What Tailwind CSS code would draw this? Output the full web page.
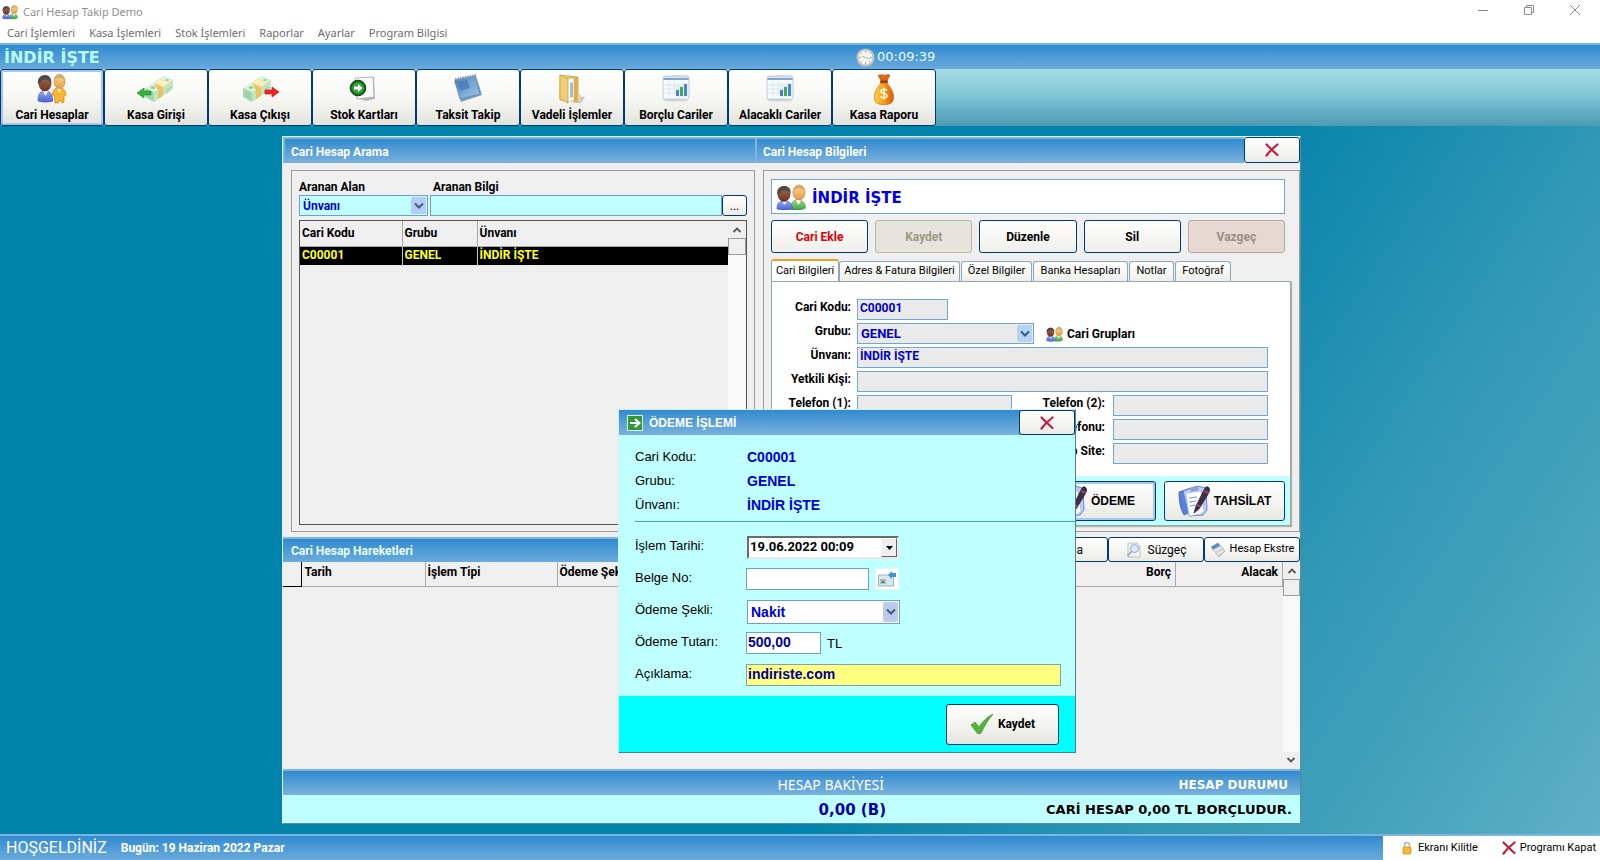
<!DOCTYPE html>
<html lang="tr">
<head>
<meta charset="utf-8">
<meta name="viewport" content="width=device-width, initial-scale=1">
<title>Cari Hesap Takip Demo</title>
<script src="https://cdn.jsdelivr.net/npm/@tailwindcss/browser@4"></script>
</head>
<body class="flex h-screen min-h-[860px] flex-col overflow-hidden bg-white font-['Roboto','Liberation_Sans',sans-serif] text-xs text-black">

<!-- shared icons -->
<svg class="absolute size-0" aria-hidden="true">
  <defs>
    <linearGradient id="gSkin" x1="0" y1="0" x2="0" y2="1"><stop offset="0" stop-color="#ffd693"/><stop offset="1" stop-color="#e79c46"/></linearGradient>
    <linearGradient id="gDark" x1="0" y1="0" x2="0" y2="1"><stop offset="0" stop-color="#a86a4c"/><stop offset="1" stop-color="#6d3522"/></linearGradient>
    <linearGradient id="gBlue" x1="0" y1="0" x2="0" y2="1"><stop offset="0" stop-color="#8fa8f5"/><stop offset="1" stop-color="#4a63d0"/></linearGradient>
    <linearGradient id="gGreen" x1="0" y1="0" x2="0" y2="1"><stop offset="0" stop-color="#9be08e"/><stop offset="1" stop-color="#3fa03c"/></linearGradient>
    <linearGradient id="gGold" x1="0" y1="0" x2="1" y2="0"><stop offset="0" stop-color="#ffd83d"/><stop offset=".4" stop-color="#fba51c"/><stop offset="1" stop-color="#d95d06"/></linearGradient>
    <linearGradient id="gFolder" x1="0" y1="0" x2="1" y2="0"><stop offset="0" stop-color="#f8e29a"/><stop offset="1" stop-color="#d9a93c"/></linearGradient>
    <linearGradient id="gScreen" x1="0" y1="0" x2="1" y2="1"><stop offset="0" stop-color="#4f83bd"/><stop offset="1" stop-color="#9cc8ea"/></linearGradient>
  </defs>
  <symbol id="people" viewBox="0 0 30 26">
    <path d="M15 25c0-7 2-9 7-9s7 3 7.500 8l-5 2h-8z" fill="url(#gGreen)" stroke="#3a8a39" stroke-width=".6"/>
    <path d="M20 16l2.500 5 2.500-5z" fill="#fff"/>
    <ellipse cx="23" cy="8.500" rx="6" ry="7.500" fill="url(#gSkin)" stroke="#b98139" stroke-width=".7"/>
    <path d="M17 7c0-5 4-6.500 7-6 3 .5 5 3 5 6-3-3-8-3.500-12 0z" fill="#cdb072"/>
    <path d="M1 25c0-6 2-8 7-8s8 2 8.500 8c-4 1.500-11 1.500-15.500 0z" fill="url(#gBlue)" stroke="#3a50b5" stroke-width=".6"/>
    <path d="M6 17l2.500 4 2.500-4z" fill="#fff"/>
    <ellipse cx="8" cy="10" rx="6" ry="7.500" fill="url(#gDark)" stroke="#4d2518" stroke-width=".7"/>
    <path d="M1.500 11C0 5 4 2 8 2s7 2 6.500 7C11 5 5 6 4 8.500z" fill="#4b4b4b"/>
  </symbol>
  <symbol id="peopleGold" viewBox="0 0 30 30">
    <path d="M18 29l-.5-7-2-1c0-5 2-7 6.500-7s7 2 7 7l-2 1v6l-2 1-2-3-2 3z" fill="#f7b733" stroke="#cf8413" stroke-width=".7"/>
    <path d="M20 14l2.500 5 2-5z" fill="#fff2c0"/>
    <ellipse cx="22.500" cy="7.500" rx="5.500" ry="7" fill="url(#gSkin)" stroke="#b98139" stroke-width=".7"/>
    <path d="M17 6c0-4 3-6 6-5.500 3 .5 5 3 5 5.500-3-2.500-7-3-11 0z" fill="#cdb072"/>
    <path d="M1 27c0-7 2-10 7-10s7 2 8 10c-4 1.500-11 1.500-15 0z" fill="url(#gBlue)" stroke="#3a50b5" stroke-width=".6"/>
    <path d="M6 17l2.500 5 2.500-5z" fill="#fff"/>
    <ellipse cx="8" cy="9.500" rx="6" ry="7.500" fill="url(#gDark)" stroke="#4d2518" stroke-width=".7"/>
    <path d="M1 10C0 4 4 1 8 1s7 3 6 8C11 4 5 5 4 8z" fill="#4b4b4b"/>
  </symbol>
  <symbol id="money" viewBox="0 0 38 28">
    <path d="M8 13L27 1l9 4v9L17 27l-9-5z" fill="#c2e6c4"/>
    <path d="M8 13L27 1l9 4-19 12z" fill="#dff3df"/>
    <path d="M17 17v10l-9-5v-9z" fill="#a5d8ac"/>
    <path d="M17 8l6-4 9 4-6 4v9l-5 3v-9z" fill="#eec35e"/>
    <path d="M17 8l6-4 9 4-6 4z" fill="#fff0bd"/>
    <ellipse cx="16" cy="12.500" rx="2.500" ry="1.500" fill="#9ccfa3"/><ellipse cx="30" cy="5" rx="2" ry="1" fill="#9ccfa3"/>
    <path d="M10 17l5 3M10 20l5 3M29 15l5-3M29 18l5-4" stroke="#8ec596" stroke-width=".8"/>
  </symbol>
  <symbol id="report" viewBox="0 0 30 28">
    <path d="M3 2l23-1 2 2-1 22-24 1z" fill="#e3e9ef" stroke="#c3ccd6" stroke-width=".6"/>
    <rect x="2" y="3" width="26" height="22" rx="1" fill="#f8fbfe" stroke="#b3bfcd" stroke-width=".8"/>
    <rect x="2.500" y="4" width="25" height="2" fill="#7fa6ce"/>
    <path d="M3 11h12M3 15h12M3 19h10M8 7v16M13 7v14" stroke="#d4e0ec" stroke-width=".8"/>
    <rect x="14" y="9" width="13" height="14" fill="#e6f0fa"/>
    <rect x="15" y="16" width="3" height="6" fill="#4d7ec9"/><rect x="19" y="13" width="3" height="9" fill="#48a94c"/><rect x="23" y="10" width="3" height="12" fill="#4a86d0"/>
    <path d="M3 26h24l-2 1.500H6z" fill="#d5d5d5"/>
  </symbol>
  <symbol id="cross" viewBox="0 0 14 14"><path d="M1.500 1.500c3 3 7 7 11 10.500M12.500 1.500C8 5 4 9 1.500 12.500" fill="none" stroke="#c01f3f" stroke-width="2.200" stroke-linecap="round"/></symbol>
  <symbol id="down" viewBox="0 0 10 8"><path d="M1 1.500l4 4 4-4" fill="none" stroke="#3f587c" stroke-width="2"/></symbol>
  <symbol id="up" viewBox="0 0 10 8"><path d="M1.500 6L5 2.500 8.500 6" fill="none" stroke="#555" stroke-width="1.800"/></symbol>
  <symbol id="notes" viewBox="0 0 32 32">
    <path d="M1 7l12-4 3 22-10 5C2 23 1 15 1 7z" fill="#5b7fe0" stroke="#3a57b5" stroke-width=".8"/>
    <path d="M5 6l14-5 9 2 1 22-4 5-14 1z" fill="#b9cdf8" stroke="#5273c9" stroke-width=".8"/>
    <path d="M8 8l15-2 3 20-3 3-12 2z" fill="#fbfcff" stroke="#9bb0de" stroke-width=".6"/>
    <path d="M11 13l8-1M11 17l7-1M12 21l5-1" stroke="#8193c4"/>
    <path d="M12 3l7-2 2 4-8 2z" fill="#8fa2cf"/>
    <path d="M30 2c3 2 1 6-1 9l-8 13-5 4 2-7 8-16c1-2 2-4 4-3z" fill="#3e2f45" stroke="#221a2b" stroke-width=".7"/>
    <path d="M26 6l5 2M19 20l4 2" stroke="#b7416b" stroke-width="1.600"/>
  </symbol>
</svg>

<header class="bg-white font-['Noto_Sans','Open_Sans',sans-serif]">
  <div class="flex h-6 items-center">
    <svg class="ml-0.5 size-4"><use href="#people"/></svg>
    <h1 class="ml-[5px] text-[11px] text-[#8f8f8f]">Cari Hesap Takip Demo</h1>
    <div class="mr-0.5 ml-auto flex self-start text-[#8a8a8a]">
      <button class="grid h-5 w-[46px] place-items-center" aria-label="Simge durumuna küçült"><svg class="h-2.5 w-2.5" viewBox="0 0 10 10"><path d="M0 5.500h10" stroke="currentColor"/></svg></button>
      <button class="grid h-5 w-[46px] place-items-center" aria-label="Önceki boyut"><svg class="h-2.5 w-2.5" viewBox="0 0 10 10" fill="none" stroke="currentColor"><path d="M.5 2.500h7v7h-7zM2.500 2V.5h7v7H8"/></svg></button>
      <button class="grid h-5 w-[46px] place-items-center" aria-label="Kapat"><svg class="h-2.5 w-2.5" viewBox="0 0 10 10"><path d="M0 0l10 10M10 0L0 10" stroke="currentColor"/></svg></button>
    </div>
  </div>
  <nav class="flex h-[19px] items-center gap-3.5 pl-[7px] text-[11px] text-[#6d6d6d]">
    <a href="#">Cari İşlemleri</a><a href="#">Kasa İşlemleri</a><a href="#">Stok İşlemleri</a><a href="#">Raporlar</a><a href="#">Ayarlar</a><a href="#">Program Bilgisi</a>
  </nav>
</header>

<div class="flex h-[26px] shrink-0 items-center border-t-2 border-[#78b4dc] bg-linear-to-b from-[#2f8ace] to-[#69abdc] pl-1">
  <span class="w-[852px] pt-0.5 font-['DejaVu_Sans',sans-serif] text-base leading-6 font-bold text-[#b8fbff]">İNDİR İŞTE</span>
  <svg class="size-[19px]" viewBox="0 0 20 20"><circle cx="10" cy="10" r="9.500" fill="#c9c9c5"/><circle cx="10" cy="10" r="8" fill="#f5f5f0" stroke="#9a9a96" stroke-width=".6"/><path d="M10 3v2M10 15v2M3 10h2M15 10h2M5 5l1 1M14 14l1 1M5 15l1-1M14 6l1-1" stroke="#999"/><path d="M6 8.500L10 10l5 1.500" fill="none" stroke="#999" stroke-width=".8"/></svg>
  <span class="ml-0.5 font-['DejaVu_Sans',sans-serif] text-[13px] text-[#e8fbff]">00:09:39</span>
</div>

<div class="flex h-[57px] shrink-0 bg-linear-to-b from-[#a6dde3] via-[#7cc4d5] to-[#4c9ab2] text-xs font-bold">
  <button class="flex h-full w-[104px] flex-col items-center justify-between rounded-[3px] border border-[#003c74] bg-linear-to-b from-white via-[#f7f7f5] to-[#e3e3dd] pt-1 pb-0.5 shadow-[inset_0_0_0_2px_#a8c4f0]"><svg class="size-[30px]"><use href="#peopleGold"/></svg><span class="leading-4">Cari Hesaplar</span></button>
  <button class="flex h-full w-[104px] flex-col items-center justify-between rounded-[3px] border border-[#003c74] bg-linear-to-b from-white via-[#f7f7f5] to-[#e3e3dd] pt-1 pb-0.5"><svg class="h-[30px] w-[38px]" viewBox="0 0 38 30"><use href="#money" width="38" height="28" y="1"/><path d="M0 19l7-5v3h7v4H7v3z" fill="#2fb53a" stroke="#1f8c2b" stroke-width=".6"/></svg><span class="leading-4">Kasa Girişi</span></button>
  <button class="flex h-full w-[104px] flex-col items-center justify-between rounded-[3px] border border-[#003c74] bg-linear-to-b from-white via-[#f7f7f5] to-[#e3e3dd] pt-1 pb-0.5"><svg class="h-[30px] w-[38px]" viewBox="0 0 38 30"><use href="#money" width="38" height="28" x="-6" y="1"/><path d="M38 18l-7-5v3h-7v4h7v3z" fill="#f52222" stroke="#c11010" stroke-width=".6"/></svg><span class="leading-4">Kasa Çıkışı</span></button>
  <button class="flex h-full w-[104px] flex-col items-center justify-between rounded-[3px] border border-[#003c74] bg-linear-to-b from-white via-[#f7f7f5] to-[#e3e3dd] pt-1 pb-0.5"><svg class="size-[30px]" viewBox="0 0 30 30"><path d="M8 5l17-2 1 22-9 2-10-3z" fill="#b9b9b9"/><path d="M6 4l18-1 1 20-17 2z" fill="#fafafa" stroke="#aaa" stroke-width=".8"/><circle cx="9" cy="14" r="7.800" fill="#166b20" stroke="#0c4714"/><circle cx="9" cy="14" r="5.800" fill="#33a13d"/><path d="M5 12.500h4V10l4.500 4L9 18v-2.500H5z" fill="#fff"/></svg><span class="leading-4">Stok Kartları</span></button>
  <button class="flex h-full w-[104px] flex-col items-center justify-between rounded-[3px] border border-[#003c74] bg-linear-to-b from-white via-[#f7f7f5] to-[#e3e3dd] pt-1 pb-0.5"><svg class="size-[30px]" viewBox="0 0 30 30"><path d="M1 7l22-5 6 19-21 7z" fill="#7e9dbd"/><path d="M2 6l20-4 5 18-20 5z" fill="url(#gScreen)" stroke="#5f86ae" stroke-width=".8"/><path d="M4 8l10-2 3 8-10 3z" fill="#3f71ac" opacity=".6"/><path d="M2 5l21-4" stroke="#8f9aa6" stroke-width="2" stroke-dasharray="1.500 1"/></svg><span class="leading-4">Taksit Takip</span></button>
  <button class="flex h-full w-[104px] flex-col items-center justify-between rounded-[3px] border border-[#003c74] bg-linear-to-b from-white via-[#f7f7f5] to-[#e3e3dd] pt-1 pb-0.5"><svg class="size-[30px]" viewBox="0 0 30 30"><path d="M20 22l8 1-4 6h-8z" fill="#c8c8c8"/><path d="M3 1l18 2v24l-18-1z" fill="url(#gFolder)" stroke="#c59a3a" stroke-width=".7"/><path d="M10 5l7-1v22l-7 3z" fill="#fafafa" stroke="#bbb" stroke-width=".6"/><path d="M13 9l3-1v15l-3 1z" fill="#a9bccf"/><path d="M3 1l8 4v24l-8-4z" fill="#f0cf72" stroke="#c59a3a" stroke-width=".7"/><path d="M17 4l4-1v24l-4 1z" fill="#dfb04a"/><path d="M21 20l3 1v6l-3 1z" fill="#e9d59b"/></svg><span class="leading-4">Vadeli İşlemler</span></button>
  <button class="flex h-full w-[104px] flex-col items-center justify-between rounded-[3px] border border-[#003c74] bg-linear-to-b from-white via-[#f7f7f5] to-[#e3e3dd] pt-1 pb-0.5"><svg class="h-7 w-[30px]"><use href="#report"/></svg><span class="leading-4">Borçlu Cariler</span></button>
  <button class="flex h-full w-[104px] flex-col items-center justify-between rounded-[3px] border border-[#003c74] bg-linear-to-b from-white via-[#f7f7f5] to-[#e3e3dd] pt-1 pb-0.5"><svg class="h-7 w-[30px]"><use href="#report"/></svg><span class="leading-4">Alacaklı Cariler</span></button>
  <button class="flex h-full w-[104px] flex-col items-center justify-between rounded-[3px] border border-[#003c74] bg-linear-to-b from-white via-[#f7f7f5] to-[#e3e3dd] pt-1 pb-0.5"><svg class="h-[31px] w-5" viewBox="0 0 20 31"><path d="M4 1c2 1 3-1 5 0s4-1 7 0l-3 6H7z" fill="#e06a12" stroke="#b14c08" stroke-width=".6"/><path d="M7 9h6c4 5 7 10 6.500 15-.5 5-3 6.500-9.500 6.500S1 29 .5 24C0 19 3 14 7 9z" fill="url(#gGold)" stroke="#c75b07" stroke-width=".6"/><rect x="6" y="6.500" width="8" height="2.500" rx="1" fill="#a33c08"/><path d="M13 16.500c-1-1.500-6-2-6 .8 0 2.700 6 1.700 6 4.500s-5 2.500-6.500.7M10 13.500v12" fill="none" stroke="#fff" stroke-width="1.400"/></svg><span class="leading-4">Kasa Raporu</span></button>
</div>

<main class="relative flex-1 bg-[linear-gradient(123deg,#0083ab_60%,#0e87ac_65%,#2f98b5_78%,#409fba_86%,#5fb0c8_100%)]">

  <!-- account window -->
  <section class="absolute top-[10px] left-[282px] flex h-[688px] w-[1019px] flex-col border border-[#dff3f8] border-r-[#5f8a96] border-b-[#5f8a96] bg-[#efefef]">
    <div class="flex h-[26px] shrink-0 text-white">
      <h2 class="flex w-[474px] items-center border-2 border-y-0 border-[#7cb6e0] border-t-2 bg-linear-to-b from-[#2f8ace] to-[#78b2de] pt-0.5 pl-1.5 text-xs font-bold">Cari Hesap Arama</h2>
      <h2 class="flex flex-1 items-center border-t-2 border-[#7cb6e0] bg-linear-to-b from-[#2f8ace] to-[#78b2de] pt-0.5 pl-1.5 text-xs font-bold">Cari Hesap Bilgileri</h2>
      <button class="grid w-[56px] place-items-center rounded-[3px] border border-[#003c74] bg-linear-to-b from-white to-[#ebebe6]" aria-label="Pencereyi kapat"><svg class="size-3.5"><use href="#cross"/></svg></button>
    </div>

    <div class="flex h-[374px] shrink-0 pt-[7px]">
      <div class="ml-2 flex h-[362px] w-[464px] flex-col border border-[#9a9a9a] px-[7px] pt-2 pb-1.5">
        <div class="grid grid-cols-[134px_1fr] font-bold leading-4">
          <label for="alan">Aranan Alan</label><label for="bilgi">Aranan Bilgi</label>
        </div>
        <div class="flex gap-0.5">
          <div class="relative w-[129px]">
            <select id="alan" class="h-[21px] w-full appearance-none border border-[#6f9fd0] bg-[#c0ffff] pl-[3px] font-bold text-[#0000c8]"><option>Ünvanı</option></select>
            <span class="pointer-events-none absolute top-0.5 right-0.5 grid h-[17px] w-[15px] place-items-center rounded-[2px] bg-[#b3cdf3]"><svg class="h-2 w-2.5"><use href="#down"/></svg></span>
          </div>
          <div class="flex flex-1">
            <input id="bilgi" class="h-[21px] min-w-0 flex-1 border border-[#6f9fd0] bg-[#c0ffff] px-1">
            <button class="h-[21px] w-[25px] rounded-[3px] border border-[#003c74] bg-linear-to-b from-white to-[#ebebe6] leading-4">...</button>
          </div>
        </div>
        <div class="mt-1 flex flex-1 border border-[#555]">
          <div class="flex-1">
            <table class="w-full table-fixed border-collapse text-left font-bold">
              <colgroup><col class="w-[102px]"><col class="w-[75px]"><col></colgroup>
              <thead><tr class="h-[25px] border-b border-[#a9a9a9]"><th class="border-r border-[#a9a9a9] pl-0.5">Cari Kodu</th><th class="border-r border-[#a9a9a9] pl-0.5">Grubu</th><th class="pl-0.5">Ünvanı</th></tr></thead>
              <tbody><tr class="h-[18px] bg-black leading-4 text-[#ffff20]"><td class="border-r border-[#c8c8c8] pb-0.5 pl-0.5">C00001</td><td class="border-r border-[#c8c8c8] pb-0.5 pl-0.5">GENEL</td><td class="pb-0.5 pl-0.5">İNDİR İŞTE</td></tr></tbody>
            </table>
          </div>
          <div class="w-[18px] bg-[#f8f8f8]"><div class="grid h-[17px] place-items-center bg-[#efefef]"><svg class="h-2 w-2.5"><use href="#up"/></svg></div><div class="h-[17px] border border-[#9b9b9b] bg-[#efefef]"></div></div>
        </div>
      </div>

      <div class="ml-2 flex h-[362px] w-[537px] flex-col border border-[#9a9a9a] pt-2 pr-2 pb-[5px] pl-[7px]">
        <div class="mr-1.5 flex h-[35px] shrink-0 items-center border border-[#6fa8d8] bg-white pl-1">
          <svg class="h-[26px] w-[30px]"><use href="#people"/></svg>
          <span class="ml-1.5 pt-0.5 font-['DejaVu_Sans',sans-serif] text-[15px] leading-6 font-bold text-[#0000e0]">İNDİR İŞTE</span>
        </div>
        <div class="mt-1.5 mr-1.5 grid grid-cols-5 gap-[7px] font-bold">
          <button class="h-[33px] rounded-[3px] border border-[#003c74] bg-linear-to-b from-white to-[#efeeea] text-[#e00000]">Cari Ekle</button>
          <button class="h-[33px] rounded-[3px] border border-[#b9b8a0] bg-[#e5e5dd] text-[#9b9a84]" disabled>Kaydet</button>
          <button class="h-[33px] rounded-[3px] border border-[#003c74] bg-linear-to-b from-white to-[#efeeea]">Düzenle</button>
          <button class="h-[33px] rounded-[3px] border border-[#003c74] bg-linear-to-b from-white to-[#efeeea]">Sil</button>
          <button class="h-[33px] rounded-[3px] border border-[#b8a79b] bg-[#e6d8d2] text-[#9b8f82]" disabled>Vazgeç</button>
        </div>
        <div class="mt-1.5 flex items-end text-[11px]" role="tablist">
          <button role="tab" aria-selected="true" class="h-[22px] w-[68px] rounded-t-[3px] border border-b-0 border-[#91a7b4] border-t-2 border-t-[#f0a020] bg-white whitespace-nowrap">Cari Bilgileri</button>
          <button role="tab" class="h-[20px] w-[121px] rounded-t-[3px] border border-b-0 border-[#91a7b4] bg-linear-to-b from-white to-[#eeeeea] whitespace-nowrap">Adres &amp; Fatura Bilgileri</button>
          <button role="tab" class="ml-px h-[20px] w-[71px] rounded-t-[3px] border border-b-0 border-[#91a7b4] bg-linear-to-b from-white to-[#eeeeea] whitespace-nowrap">Özel Bilgiler</button>
          <button role="tab" class="ml-px h-[20px] w-[95px] rounded-t-[3px] border border-b-0 border-[#91a7b4] bg-linear-to-b from-white to-[#eeeeea] whitespace-nowrap">Banka Hesapları</button>
          <button role="tab" class="ml-px h-[20px] w-[45px] rounded-t-[3px] border border-b-0 border-[#91a7b4] bg-linear-to-b from-white to-[#eeeeea] whitespace-nowrap">Notlar</button>
          <button role="tab" class="ml-px h-[20px] w-[56px] rounded-t-[3px] border border-b-0 border-[#91a7b4] bg-linear-to-b from-white to-[#eeeeea] whitespace-nowrap">Fotoğraf</button>
        </div>
        <div class="flex flex-1 flex-col border border-[#91a7b4] bg-white shadow-[1px_1px_1px_#b5b5a5]">
          <div class="grid grid-cols-[79px_161px_95px_161px] items-start gap-y-[3px] pt-[17px] font-bold">
            <label for="kod" class="text-right leading-4">Cari Kodu:</label>
            <input id="kod" value="C00001" readonly class="col-span-3 ml-1.5 h-[21px] w-[91px] border border-[#6fa8d8] bg-[#eaeaea] pb-1 pl-0.5 font-bold text-[#0000c8]">
            <label for="grup" class="text-right leading-4">Grubu:</label>
            <div class="col-span-3 ml-1.5 flex items-center">
              <div class="relative w-[177px]">
                <select id="grup" class="h-[21px] w-full appearance-none border border-[#6fa8d8] bg-[#eaeaea] pl-[3px] text-[13px] font-bold text-[#0000c8]"><option>GENEL</option></select>
                <span class="pointer-events-none absolute top-0.5 right-0.5 grid h-[17px] w-[15px] place-items-center rounded-[2px] bg-[#b3d5f3]"><svg class="h-2 w-2.5"><use href="#down"/></svg></span>
              </div>
              <button class="ml-3 flex items-center gap-1 font-bold"><svg class="h-4 w-[17px]"><use href="#people"/></svg>Cari Grupları</button>
            </div>
            <label for="unvan" class="text-right leading-4">Ünvanı:</label>
            <input id="unvan" value="İNDİR İŞTE" readonly class="col-span-3 ml-1.5 h-[21px] border border-[#6fa8d8] bg-[#eaeaea] pb-1 pl-0.5 font-bold text-[#0000c8]">
            <label for="yetkili" class="text-right leading-4">Yetkili Kişi:</label>
            <input id="yetkili" readonly class="col-span-3 ml-1.5 h-[21px] border border-[#6fa8d8] bg-[#eaeaea]">
            <label for="tel1" class="text-right leading-4">Telefon (1):</label>
            <input id="tel1" readonly class="ml-1.5 h-[21px] min-w-0 border border-[#6fa8d8] bg-[#eaeaea]">
            <label for="tel2" class="pr-0.5 text-right leading-4">Telefon (2):</label>
            <input id="tel2" readonly class="ml-1.5 h-[21px] min-w-0 border border-[#6fa8d8] bg-[#eaeaea]">
            <label for="cep" class="col-start-3 pr-0.5 text-right leading-4">Cep Telefonu:</label>
            <input id="cep" readonly class="ml-1.5 h-[21px] min-w-0 border border-[#6fa8d8] bg-[#eaeaea]">
            <label for="web" class="col-start-3 pr-0.5 text-right leading-4">Web Site:</label>
            <input id="web" readonly class="ml-1.5 h-[21px] min-w-0 border border-[#6fa8d8] bg-[#eaeaea]">
          </div>
          <div class="mt-auto flex h-[49px] items-center justify-end gap-2 bg-[#c0ffff] pr-[5px] font-['Liberation_Sans',sans-serif] text-xs font-bold">
            <button class="flex h-10 w-[122px] items-center justify-center gap-1 rounded-[3px] border border-[#003c74] bg-linear-to-b from-white to-[#e9e9e3] shadow-[inset_0_0_0_2px_#a8c4f0]"><svg class="size-8"><use href="#notes"/></svg>ÖDEME</button>
            <button class="flex h-10 w-[121px] items-center justify-center gap-1 rounded-[3px] border border-[#003c74] bg-linear-to-b from-white to-[#e9e9e3]"><svg class="size-8"><use href="#notes"/></svg>TAHSİLAT</button>
          </div>
        </div>
      </div>
    </div>

    <div class="flex h-[25px] shrink-0">
      <h2 class="flex flex-1 items-center border-t-2 border-[#7cb6e0] bg-linear-to-b from-[#2f8ace] to-[#69abdc] pl-2 text-xs font-bold text-[#e8ffff]">Cari Hesap Hareketleri</h2>
      <button class="w-24 rounded-[3px] border border-[#003c74] bg-linear-to-b from-white to-[#ebebe6] pr-6 text-right">Sırala</button>
      <button class="flex w-24 items-center justify-center gap-1.5 rounded-[3px] border border-[#003c74] bg-linear-to-b from-white to-[#ebebe6]"><svg class="size-4" viewBox="0 0 16 16"><path d="M2 1h9l3 3v11H2z" fill="#f2f2f2" stroke="#b5b5b5" stroke-width=".8"/><circle cx="8.500" cy="6.500" r="4" fill="#dceafa" stroke="#93a9c4"/><path d="M5.500 9.500L1.500 14" stroke="#93a9c4" stroke-width="1.800"/></svg>Süzgeç</button>
      <button class="flex w-24 items-center justify-center gap-1 rounded-[3px] border border-[#003c74] bg-linear-to-b from-white to-[#ebebe6] text-[11px] whitespace-nowrap"><svg class="size-4" viewBox="0 0 16 16"><path d="M1 5l7-4 7 8-6 6z" fill="#d0d4da" stroke="#a7adb5" stroke-width=".7"/><path d="M1 5l7-4 2 2.500-7 4z" fill="#5c88bd"/><path d="M5 9l6-3M7 12l6-3" stroke="#fff"/></svg>Hesap Ekstre</button>
    </div>
    <div class="flex flex-1 bg-[#efefef]">
      <div class="flex-1">
        <table class="w-full table-fixed border-collapse text-left font-bold leading-4">
          <colgroup><col class="w-[18px]"><col class="w-[124px]"><col class="w-[132px]"><col class="w-[140px]"><col><col class="w-[120px]"><col class="w-[107px]"></colgroup>
          <thead><tr class="h-6 border-b border-[#a9a9a9] align-top"><th class="border-r border-b border-black"></th><th class="border-r border-[#a9a9a9] pt-0.5 pl-[3px]">Tarih</th><th class="border-r border-[#a9a9a9] pt-0.5 pl-0.5">İşlem Tipi</th><th class="border-r border-[#a9a9a9] pt-0.5 pl-0.5">Ödeme Şekli</th><th class="border-r border-[#a9a9a9] pt-0.5 pl-0.5">Açıklama</th><th class="border-r border-[#a9a9a9] pt-0.5 pr-1 text-right">Borç</th><th class="border-r border-[#a9a9a9] pt-0.5 pr-1 text-right">Alacak</th></tr></thead>
        </table>
      </div>
      <div class="flex w-[17px] flex-col bg-[#f8f8f8]"><div class="grid h-[17px] place-items-center bg-[#efefef]"><svg class="h-2 w-2.5"><use href="#up"/></svg></div><div class="h-[17px] border border-[#9b9b9b] bg-[#efefef]"></div><div class="mt-auto grid h-[17px] rotate-180 place-items-center bg-[#efefef]"><svg class="h-2 w-2.5"><use href="#up"/></svg></div></div>
    </div>
    <div class="grid h-[26px] shrink-0 grid-cols-[601px_1fr] items-center border-t-2 border-[#7cb6e0] bg-linear-to-b from-[#2f8ace] to-[#78b2de] pt-1 text-right text-white">
      <h3 class="font-['Noto_Sans',sans-serif] text-sm leading-5">HESAP BAKİYESİ</h3>
      <h3 class="pr-3 font-['DejaVu_Sans',sans-serif] text-xs font-bold">HESAP DURUMU</h3>
    </div>
    <div class="grid h-7 shrink-0 grid-cols-[603px_1fr] items-center bg-[#c0ffff] pt-0.5 text-right font-['DejaVu_Sans',sans-serif] font-bold">
      <output class="text-[15px] leading-5 text-[#0000a8]">0,00 (B)</output>
      <output class="pr-2 text-[13px] leading-5">CARİ HESAP 0,00 TL BORÇLUDUR.</output>
    </div>
  </section>

  <!-- payment dialog -->
  <form class="absolute top-[283px] left-[618px] flex h-[344px] w-[458px] flex-col border border-[#c8f4fa] border-r-[#4f7f8c] border-b-[#4f7f8c] bg-[#c0ffff] font-['Liberation_Sans',sans-serif] text-[13px]">
    <div class="flex h-[25px] shrink-0 bg-linear-to-b from-[#2f8ace] to-[#78b2de]">
      <h2 class="flex flex-1 items-center gap-1.5 pl-2 text-xs font-bold text-white"><svg class="size-4" viewBox="0 0 16 16"><rect x=".5" y=".5" width="15" height="15" fill="#35963a" stroke="#d9f0d9"/><path d="M3 8h9M8 4l4.500 4L8 12" fill="none" stroke="#fff" stroke-width="2"/></svg>ÖDEME İŞLEMİ</h2>
      <button type="button" class="grid w-[56px] place-items-center rounded-[3px] border border-[#003c74] bg-linear-to-b from-white to-[#ebebe6]" aria-label="Ödeme penceresini kapat"><svg class="size-3.5"><use href="#cross"/></svg></button>
    </div>
    <dl class="ml-4 grid grid-cols-[112px_1fr] border-b border-[#3fa9b5] pt-2.5 pb-1 leading-6">
      <dt>Cari Kodu:</dt><dd class="text-sm leading-6 font-bold text-[#0000d0]">C00001</dd>
      <dt>Grubu:</dt><dd class="text-sm leading-6 font-bold text-[#0000d0]">GENEL</dd>
      <dt>Ünvanı:</dt><dd class="text-sm leading-6 font-bold text-[#0000d0]">İNDİR İŞTE</dd>
    </dl>
    <div class="ml-4 grid auto-rows-[32px] grid-cols-[111px_1fr] pt-3.5">
      <label for="tarih" class="leading-5">İşlem Tarihi:</label>
      <div class="relative ml-px h-[23px] w-[152px]"><input id="tarih" value="19.06.2022 00:09" class="h-full w-full border-2 border-[#6b6b6b] border-r-[#e8e8e8] border-b-[#e8e8e8] bg-white pb-0.5 pl-px font-['Roboto',sans-serif] text-[13px] font-bold"><button type="button" aria-label="Takvimi aç" class="absolute top-0.5 right-0.5 grid h-[19px] w-4 place-items-center border border-[#f8f8f8] border-r-[#666] border-b-[#666] bg-[#efefef]"><svg class="h-1 w-[7px]" viewBox="0 0 7 4"><path d="M0 0h7L3.500 4z"/></svg></button></div>
      <label for="belge" class="leading-5">Belge No:</label>
      <div class="flex gap-1.5"><input id="belge" class="h-[22px] w-[123px] border border-[#6f9fd0] bg-white px-1"><button type="button" aria-label="Belge seç" class="grid h-[22px] w-6 place-items-center border border-[#eaf4f4] bg-white"><svg class="h-4 w-[18px]" viewBox="0 0 18 16"><rect x=".5" y="4" width="15" height="11" fill="#d6e6f2" stroke="#9db6c8"/><rect x="2" y="8" width="6" height="5" fill="#a9c0b5"/><path d="M3 12l2-3 2 3z" fill="#5f7f78"/><path d="M10 4l4-4v2h4v4h-4v2z" fill="#3f93cf"/></svg></button></div>
      <label for="sekil" class="leading-5">Ödeme Şekli:</label>
      <div class="relative ml-px h-6 w-[153px]"><select id="sekil" class="h-full w-full appearance-none border border-[#6f9fd0] bg-white pl-[3px] text-sm font-bold text-[#0000d0]"><option>Nakit</option></select><span class="pointer-events-none absolute top-0.5 right-0.5 grid h-5 w-[15px] place-items-center rounded-[2px] bg-[#bccbec]"><svg class="h-2 w-2.5"><use href="#down"/></svg></span></div>
      <label for="tutar" class="leading-5">Ödeme Tutarı:</label>
      <div class="flex items-start gap-1.5"><input id="tutar" value="500,00" class="h-[22px] w-[75px] border border-[#6f9fd0] bg-white pb-0.5 pl-px text-sm font-bold text-[#000098]"><span class="leading-6">TL</span></div>
      <label for="aciklama" class="leading-5">Açıklama:</label>
      <input id="aciklama" value="indiriste.com" class="h-[22px] w-[315px] border border-[#8a9fae] bg-[#ffff80] pb-0.5 pl-px text-sm font-bold text-[#000098]">
    </div>
    <div class="mt-auto flex h-14 shrink-0 items-center justify-end bg-[#00ffff] pr-4">
      <button type="button" class="flex h-[41px] w-[113px] items-center justify-center gap-1 rounded-[3px] border border-[#003c74] bg-linear-to-b from-white to-[#e6e6e0] font-['Roboto',sans-serif] text-xs font-bold"><svg class="h-5 w-6" viewBox="0 0 24 20"><path d="M1 11l4-3 4 5C13 7 17 3 23 0c-5 6-8 11-12 19l-3 1z" fill="#55b53c" stroke="#378f22" stroke-width=".7"/></svg>Kaydet</button>
    </div>
  </form>
</main>

<footer class="flex h-[26px] shrink-0 items-center border-t-2 border-[#7cb6e0] bg-linear-to-b from-[#2f8ace] to-[#69abdc] text-white">
  <span class="pl-1.5 text-base leading-6">HOŞGELDİNİZ</span>
  <span class="ml-3.5 text-xs font-bold">Bugün: 19 Haziran 2022 Pazar</span>
  <div class="ml-auto flex h-full w-[217px] items-center bg-white pl-[17px] text-[11px] text-black">
    <button class="flex items-center gap-1"><svg class="size-3.5" viewBox="0 0 14 14"><path d="M4.500 7V4a2.500 2.500 0 015 0v3" fill="none" stroke="#b3b3b3" stroke-width="1.500"/><rect x="3" y="6" width="8" height="7" rx="1" fill="#f3bb2f" stroke="#c78e12" stroke-width=".7"/></svg>Ekranı Kilitle</button>
    <button class="mr-1 ml-auto flex items-center gap-1 whitespace-nowrap"><svg class="size-3.5"><use href="#cross"/></svg>Programı Kapat</button>
  </div>
</footer>
</body>
</html>
